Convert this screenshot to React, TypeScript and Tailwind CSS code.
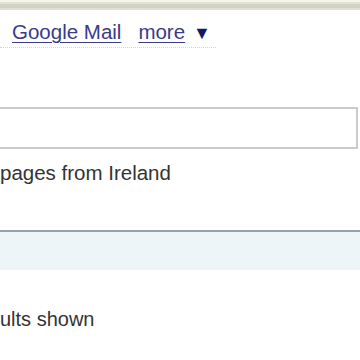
const App = () => {
  return (
    <div className="w-[360px] h-[360px] overflow-hidden bg-white font-['Liberation_Sans',Arial,sans-serif] text-[20.5px] text-[#333]">
      <div className="h-[2px] bg-[#f6f6ee]" />
      <div className="h-[8px] bg-[#d2d2c2] border-y-2 border-[#e2e2d4]" />
      <div className="flex items-baseline pl-[12px] pt-[7px] h-[38px] border-b border-dotted border-[#d4d4dc] w-[216px]">
        <a href="#" className="text-[#3b3b86] underline underline-offset-[3px] decoration-1">
          Google Mail
        </a>
        <a href="#" className="ml-[17px] text-[#3b3b86] underline underline-offset-[3px] decoration-1">
          more
        </a>
        <span className="ml-[8px] text-[#16166a] text-[18px]">▼</span>
      </div>

      <div className="mt-[59px] -ml-[10px] w-[368px] h-[42px] border-2 border-[#c6ccd0]" />

      <div className="mt-[13px] leading-[22px]">pages from Ireland</div>

      <div className="mt-[46px] h-[2px] bg-[#9aa0b2]" />
      <div className="h-[38px] bg-[#eef5f8]" />

      <div className="mt-[38px] leading-[22px] text-[20px]">ults shown</div>
    </div>
  );
};

export default App;
